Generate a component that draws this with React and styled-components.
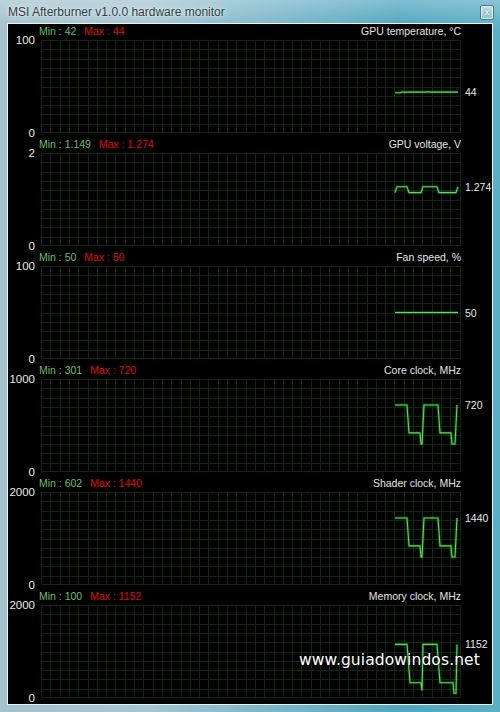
import React from 'react'
import styled, { createGlobalStyle } from 'styled-components'

const GlobalStyle = createGlobalStyle`
  html, body {
    margin: 0;
    padding: 0;
    background: #000;
  }
  body {
    width: 500px;
    height: 712px;
    overflow: hidden;
  }
`

// plot geometry, page coords of the plot left edge are used for the data points
const PLOT_W = 420
const PLOT_H = 93
const PLOT_LEFT = 41
const CELL = PLOT_H / 10

const clock = (h, l, d) => [
  [395, h], [407, h], [409, l], [420, l], [421, d], [422, d], [424, h],
  [438, h], [440, l], [451, l], [452, d], [455, d], [457, h],
]

const graphs = [
  {
    title: 'GPU temperature, °C', top: '100', max: 100, min: '42', peak: '44', value: '44',
    points: [[395, 43.2], [400, 43.2], [402, 44], [426, 44], [428, 44.3], [431, 44], [458, 44]],
  },
  {
    title: 'GPU voltage, V', top: '2', max: 2, min: '1.149', peak: '1.274', value: '1.274',
    points: [
      [395, 1.149], [397, 1.274], [407, 1.274], [409, 1.149], [421, 1.149], [423, 1.274],
      [437, 1.274], [439, 1.149], [456, 1.149], [458, 1.274],
    ],
  },
  {
    title: 'Fan speed, %', top: '100', max: 100, min: '50', peak: '50', value: '50',
    points: [[395, 50], [458, 50]],
  },
  {
    title: 'Core clock, MHz', top: '1000', max: 1000, min: '301', peak: '720', value: '720',
    points: clock(720, 420, 301),
  },
  {
    title: 'Shader clock, MHz', top: '2000', max: 2000, min: '602', peak: '1440', value: '1440',
    points: clock(1440, 840, 602),
  },
  {
    title: 'Memory clock, MHz', top: '2000', max: 2000, min: '100', peak: '1152', value: '1152',
    points: [
      [395, 1152], [407, 1152], [410, 330], [421, 330], [422, 160], [423, 1152],
      [437, 1152], [440, 330], [453, 330], [454, 100], [456, 100], [457, 1152],
    ],
  },
]

const Window = styled.div`
  position: relative;
  width: 500px;
  height: 712px;
  box-sizing: border-box;
  display: flex;
  flex-direction: column;
  padding: 0 7px 7px;
  background:
    linear-gradient(180deg, rgba(255, 255, 255, 0.28) 0px, rgba(255, 255, 255, 0.05) 22px, rgba(255, 255, 255, 0) 30px),
    linear-gradient(90deg, #a6c2cd 0%, #a3c6d2 30%, #72b3c7 60%, #4fa6bf 80%, #5cb0c6 100%);
  font-family: "Liberation Sans", Arial, sans-serif;
`

const TitleBar = styled.div`
  height: 23px;
  display: flex;
  align-items: center;
  justify-content: space-between;
  padding-left: 1px;
  margin-right: -1px;
`

const Caption = styled.span`
  font-size: 12px;
  color: #2c3a40;
  text-shadow: 0 0 6px rgba(255, 255, 255, 0.9), 0 0 2px rgba(255, 255, 255, 0.8);
`

const CloseButton = styled.div`
  width: 12px;
  height: 13px;
  margin-top: 2px;
  display: flex;
  align-items: center;
  justify-content: center;
  border: 1px solid #44788a;
  border-radius: 2px;
  box-shadow: inset 0 0 0 1px rgba(255, 255, 255, 0.7);
  background: linear-gradient(180deg, #c9e2ea, #94c3d2);
  font-size: 9px;
  font-weight: bold;
  line-height: 1;
  color: #f4f8fa;
  text-shadow: 0 0 2px #3b6574;
`

const Client = styled.div`
  flex: 1;
  display: flex;
  flex-direction: column;
  background: #000;
  border: 1px solid #e6f3f7;
`

const Panel = styled.div`
  display: grid;
  grid-template-columns: 33px ${PLOT_W}px 1fr;
  grid-template-rows: 16px ${PLOT_H}px 4px;
  height: 113px;
`

const Header = styled.div`
  grid-column: 2;
  grid-row: 1;
  display: flex;
  justify-content: space-between;
  align-items: flex-start;
  margin-left: -2px;
  font-size: 10.5px;
  line-height: 14px;
`

const Stats = styled.div`
  display: flex;
  gap: 8px;
`

const MinText = styled.span`
  color: #6cbf6c;
`

const MaxText = styled.span`
  color: #b21c1c;
  text-shadow: 0 0 3px rgba(120, 0, 0, 0.9);
`

const GraphTitle = styled.span`
  color: #e4e4e4;
`

const Scale = styled.div`
  grid-column: 1;
  grid-row: 2;
  display: flex;
  flex-direction: column;
  justify-content: space-between;
  align-items: flex-end;
  padding-right: 6px;
  font-size: 11.5px;
  line-height: 12px;
  color: #eaeaea;

  span:first-child { margin-top: -6px; }
  span:last-child { margin-bottom: -6px; }
`

const Plot = styled.svg`
  grid-column: 2;
  grid-row: 2;
  display: block;
`

const ValueColumn = styled.div`
  grid-column: 3;
  grid-row: 2;
  position: relative;
`

const ValueLabel = styled.span`
  position: absolute;
  left: 4px;
  transform: translateY(-50%);
  font-size: 10.5px;
  line-height: 12px;
  color: #e8e8e8;
`

const Watermark = styled.div`
  position: absolute;
  left: 299px;
  top: 651px;
  font-family: "DejaVu Sans", sans-serif;
  font-size: 15.5px;
  letter-spacing: 0.1px;
  color: #fff;
  text-shadow: 0 0 2px #000;
`

const Grid = () => {
  const cols = Math.round(PLOT_W / CELL)
  const lines = []
  for (let i = 0; i <= cols; i++) {
    const x = Math.min(Math.round(i * CELL) + 0.5, PLOT_W - 0.5)
    lines.push(<line key={'v' + i} x1={x} y1={0} x2={x} y2={PLOT_H} />)
  }
  for (let j = 0; j <= 10; j++) {
    const y = Math.min(Math.round(j * CELL) + 0.5, PLOT_H - 0.5)
    lines.push(<line key={'h' + j} x1={0} y1={y} x2={PLOT_W} y2={y} />)
  }
  return <g stroke="#0f270f" strokeWidth="1" shapeRendering="crispEdges">{lines}</g>
}

const Graph = ({ g }) => {
  const pts = g.points.map(([px, v]) => [px - PLOT_LEFT, PLOT_H * (1 - v / g.max)])
  const path = pts.map(([x, y]) => `${x},${y.toFixed(1)}`).join(' ')
  const lastY = pts[pts.length - 1][1]

  return (
    <Panel>
      <Header>
        <Stats>
          <MinText>Min : {g.min}</MinText>
          <MaxText>Max : {g.peak}</MaxText>
        </Stats>
        <GraphTitle>{g.title}</GraphTitle>
      </Header>
      <Scale>
        <span>{g.top}</span>
        <span>0</span>
      </Scale>
      <Plot width={PLOT_W} height={PLOT_H} viewBox={`0 0 ${PLOT_W} ${PLOT_H}`}>
        <Grid />
        <polyline points={path} fill="none" stroke="#3fd03f" strokeOpacity="0.25" strokeWidth="3" />
        <polyline points={path} fill="none" stroke="#56e056" strokeWidth="1.1" />
      </Plot>
      <ValueColumn>
        <ValueLabel style={{ top: lastY }}>{g.value}</ValueLabel>
      </ValueColumn>
    </Panel>
  )
}

export default function App() {
  return (
    <>
      <GlobalStyle />
      <Window>
        <TitleBar>
          <Caption>MSI Afterburner v1.0.0 hardware monitor</Caption>
          <CloseButton>x</CloseButton>
        </TitleBar>
        <Client>
          {graphs.map((g) => (
            <Graph key={g.title} g={g} />
          ))}
        </Client>
        <Watermark>www.guiadowindos.net</Watermark>
      </Window>
    </>
  )
}
